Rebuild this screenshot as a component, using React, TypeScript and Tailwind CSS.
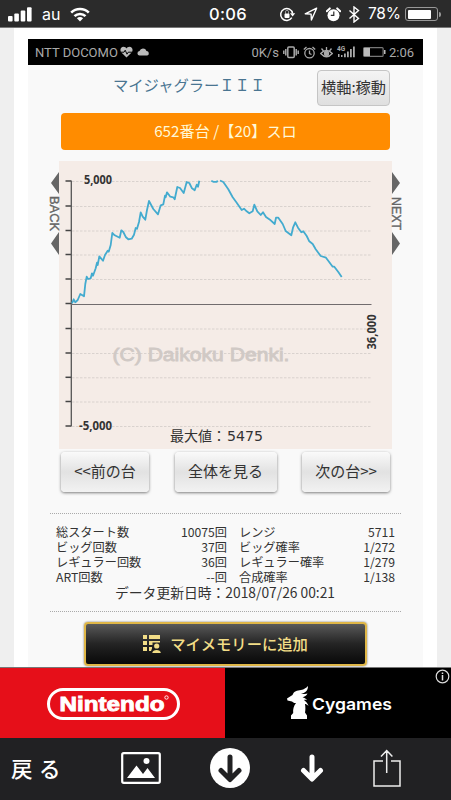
import type { ReactNode } from "react";
import { BsLockFill } from "react-icons/bs";

const JP = "font-['Noto_Sans_CJK_JP',sans-serif]";

interface Stat {
  label: string;
  value: string;
}

const leftStats: Stat[] = [
  { label: "総スタート数", value: "10075回" },
  { label: "ビッグ回数", value: "37回" },
  { label: "レギュラー回数", value: "36回" },
  { label: "ART回数", value: "--回" },
];

const rightStats: Stat[] = [
  { label: "レンジ", value: "5711" },
  { label: "ビッグ確率", value: "1/272" },
  { label: "レギュラー確率", value: "1/279" },
  { label: "合成確率", value: "1/138" },
];

const ticks = [181, 206, 230.5, 254.5, 279, 303.5, 328.5, 353, 377.3, 401.5, 426];

// the line leaves the plot above 5,000, so it comes in three pieces
const series = [
  "72,303.3 73.7,299.3 75.3,302.3 77.7,300 80.3,294 84,296.3 85.3,284 86.7,276.7 88,279 90.7,278.3 92,273.3 93,275.7 95.7,268.3 97,262.7 97.7,265 99.3,256.3 103,260.7 105,255 107.7,250.7 108.7,251.7 110.7,245 112.3,233 114.7,235.3 119.7,237.7 121.3,230.3 123.3,232 126,237.3 128.3,239.3 131.7,238.7 134,234.7 135.7,228 137,228.7 139,222 140.7,212.3 142.7,216.7 145.3,219.7 147,210 149,201 153.3,209 158,214.3 160.7,205.3 163.3,204.3 165,195.7 165.7,197.3 167,192.3 170.3,196.7 173.3,197.3 174.7,199.3 177.3,187 180,188 183.7,193 186.7,182 189.3,183 192,188.3 194.7,190.3 196.7,184.7 198,186.7 199.3,180.7",
  "211.3,180.7 213.3,181.8 216.7,181.8 217.7,180.7",
  "220,180.5 223.3,182 228.3,189.3 232.7,197.3 236.7,202.7 241.7,210 244,208.7 246.7,211.3 249.3,213.3 252.7,211.3 254.3,204.7 257.3,211.3 260.7,215 263,212.3 266,217 270.7,220.3 274.7,224 276,217.7 278.3,217.7 282.7,224 285.7,231 291.3,235.3 293,227.7 295.3,222.3 298,227.7 301.3,232.3 303.3,231.3 306.7,236 309.3,241.3 312.7,244 315.7,249.3 320.7,256 326,257.7 332.7,266.7 334.3,266.7 338.3,272 341.7,277",
];

function IosStatusBar() {
  return (
    <div className="flex h-[28px] shrink-0 items-center border-b border-[#777] bg-[#2b2b2b] pt-[1px] font-['Inter','Roboto',sans-serif] text-white">
      <svg className="ml-[8px] h-[15px] w-[24px]" viewBox="0 0 24 15" fill="currentColor">
        <rect x="0" y="9" width="4.6" height="5.5" rx="1" />
        <rect x="6.3" y="6.5" width="4.6" height="8" rx="1" />
        <rect x="12.7" y="3.5" width="4.6" height="11" rx="1" />
        <rect x="19" y="0.3" width="4.6" height="14.2" rx="1" />
      </svg>
      <span className="ml-[10px] w-[28px] text-[16px] leading-none">au</span>
      <svg className="h-[15px] w-[20px]" viewBox="0 0 20 15" fill="none" stroke="currentColor" strokeWidth="2.6">
        <path d="M1.200 5.600C6 .8 14 .8 18.800 5.600" />
        <path d="M4.500 9.200C7.500 6.200 12.500 6.200 15.500 9.200" />
        <path d="M10 14.500L6.900 11.300C8.700 9.700 11.300 9.700 13.100 11.300z" fill="currentColor" stroke="none" />
      </svg>
      <span className="ml-[119px] w-[70px] text-[16.5px] font-medium leading-none tracking-[0.3px]">0:06</span>
      <div className="flex items-center">
        <span className="relative h-[16px] w-[17px]">
          <svg className="size-full" viewBox="0 0 17 16" fill="none" stroke="currentColor" strokeWidth="1.5">
            <path d="M12.8 11.6A6 6 0 1 1 13.6 7.5" />
            <path d="M11 7.2h5.2l-2.6 3.2z" fill="currentColor" stroke="none" />
          </svg>
          <BsLockFill className="absolute top-[4px] left-[3.5px] size-[8px]" />
        </span>
        <svg className="ml-[8px] size-[14px]" viewBox="0 0 14 14" fill="none" stroke="currentColor" strokeWidth="1.4">
          <path d="M12.6 1.2L1.2 6.8l5.9.3.3 5.9z" strokeLinejoin="round" />
        </svg>
        <svg className="ml-[8px] size-[15px]" viewBox="0 0 15 15">
          <circle cx="7.5" cy="8.2" r="6" fill="white" />
          <path d="M.8 4.2L3.8 1.4M14.2 4.2l-3-2.8" stroke="white" strokeWidth="2" strokeLinecap="round" />
          <path d="M7.8 4.6v3.8H4.8" stroke="#2b2b2b" strokeWidth="1.2" fill="none" />
        </svg>
        <svg className="ml-[7px] h-[17px] w-[12px]" viewBox="0 0 12 17" fill="none" stroke="currentColor" strokeWidth="1.4">
          <path d="M1.500 4.500l9 8L6 16V1l4.500 3.500-9 8" />
        </svg>
        <span className="ml-[8px] w-[37px] text-[15.5px] leading-none tracking-[-0.2px]">78%</span>
        <div className="h-[14px] w-[33px] rounded-[3px] border border-[#999] p-[1.5px]">
          <div className="h-full w-[23px] rounded-[1px] bg-white" />
        </div>
        <div className="ml-[1px] h-[5px] w-[2px] rounded-r bg-[#999]" />
      </div>
    </div>
  );
}

function AndroidBar() {
  return (
    <div className="flex h-[26px] shrink-0 items-center justify-between bg-black pr-[9px] pl-[7px] font-['Roboto',sans-serif] text-[#a9a9a9]">
      <div className="flex items-center">
        <span className="text-[13px] leading-none">NTT DOCOMO</span>
        <svg className="ml-[2px] h-[12px] w-[13px]" viewBox="0 0 13 12">
          <path d="M6.5 11.6L1.4 6.6C-.6 4.2.7.8 3.5.8c1.400 0 2.500.8 3 1.800.5-1 1.600-1.800 3-1.800 2.800 0 4.100 3.400 2.100 5.800z" fill="#bbb" />
          <path d="M1 6.200h3l1.200-2 1.800 4 1.200-2H12" stroke="black" fill="none" strokeWidth="1" />
        </svg>
        <svg className="ml-[4px] h-[8px] w-[13px]" viewBox="0 0 13 8" fill="#bbb">
          <path d="M2.800 7.500a2.200 2.200 0 0 1-.3-4.400A3.700 3.700 0 0 1 9.500 3a2.300 2.300 0 0 1 .7 4.500z" />
        </svg>
      </div>
      <div className="flex items-center">
        <span className="text-[13px] leading-none">0K/s</span>
        <svg className="ml-[4px] h-[14px] w-[16px]" viewBox="0 0 16 14" fill="none" stroke="currentColor" strokeWidth="1.500">
          <rect x="4.800" y="2" width="6.400" height="10.500" rx="1" />
          <path d="M2.800 4v6.500M13.200 4v6.500M.8 5.500v3.500M15.200 5.500v3.500" />
        </svg>
        <svg className="ml-[4px] size-[13px]" viewBox="0 0 13 13" fill="none" stroke="currentColor" strokeWidth="1.300">
          <circle cx="6.500" cy="7.200" r="4.700" />
          <path d="M.8 3.500L3.500 1M12.200 3.500L9.500 1M6.500 4.500v3l2 1" />
        </svg>
        <svg className="ml-[4px] size-[13px]" viewBox="0 0 13 13" fill="none" stroke="currentColor" strokeWidth="1.300">
          <path d="M.7 7.500Q6.500 1.500 12.300 7.500Q6.500 14 .7 7.500z" />
          <circle cx="6.500" cy="7.500" r="2" fill="currentColor" />
          <path d="M6.500 1v3M1.500 2.500l2 2.500M11.500 2.500l-2 2.500" />
        </svg>
        <svg className="ml-[4px] h-[14px] w-[18px] overflow-visible" viewBox="0 0 18 14" fill="currentColor">
          <text x="0" y="5.500" fontSize="6.500" fontWeight="700">4G</text>
          <path d="M1 9h1.500v3H1zM4 10h1.500v2H4zM7 8.500h1.800v3.800H7zM10 6.500h1.800v5.800H10zM13 4h1.800v8.300H13zM16 1.500h1.800v10.800H16z" />
        </svg>
        <svg className="ml-[8px] h-[10px] w-[23px]" viewBox="0 0 23 10">
          <rect x=".6" y=".6" width="19.500" height="8.800" rx="1" fill="none" stroke="#777" strokeWidth="1.200" />
          <rect x="1" y="1" width="6" height="8" fill="#bbb" />
          <rect x="21" y="3" width="1.500" height="4" fill="#bbb" />
        </svg>
        <span className="ml-[3px] text-[13px] leading-none">2:06</span>
      </div>
    </div>
  );
}

function SlumpGraph() {
  return (
    <svg className="ml-[22px] h-[288px] w-[351px] shrink-0 overflow-visible" viewBox="50 161 351 288">
      <rect x="59" y="161" width="333" height="288" fill="#f5ece7" />
      <path d="M59 172v22l-8-11zM59 232v23l-8-11.500zM392 172v22l8-11zM392 232v23l8-11.500z" fill="#666" />
      <g className="font-['Liberation_Sans',sans-serif]" fontSize="13" fill="#666" stroke="#666" strokeWidth="0.4">
        <text transform="translate(50 196) rotate(90)" textLength="35" lengthAdjust="spacingAndGlyphs">BACK</text>
        <text transform="translate(392 197) rotate(90)" textLength="33" lengthAdjust="spacingAndGlyphs">NEXT</text>
      </g>
      {ticks.map((y) => (
        <g key={y}>
          <path d={`M65.500 ${y}H71`} stroke="#444" strokeWidth="1.500" />
          {y !== 303.5 && <path d={`M72 ${y + 0.5}H371`} stroke="#d9d2ce" strokeDasharray="2.500 1.500" />}
        </g>
      ))}
      <path d="M71.300 180.500V426.500" stroke="#555" strokeWidth="1.300" />
      <path d="M71 304.500H371.500" stroke="#716c6e" />
      <text x="112.500" y="361" fontSize="18.500" textLength="177" lengthAdjust="spacingAndGlyphs" fill="#d0c9c5" stroke="#d0c9c5" strokeWidth="0.8" className="font-['Liberation_Sans',sans-serif]">
        (C) Daikoku Denki.
      </text>
      {series.map((points) => (
        <polyline key={points} points={points} fill="none" stroke="#43abcf" strokeWidth="1.800" strokeLinejoin="round" />
      ))}
      <g className="font-['Open_Sans',sans-serif]" fontSize="12" fontWeight="700" fill="#333">
        <text x="84" y="184" textLength="28" lengthAdjust="spacingAndGlyphs">5,000</text>
        <text x="79" y="429.500" textLength="33" lengthAdjust="spacingAndGlyphs">-5,000</text>
        <text transform="translate(375.500 349.500) rotate(-90)" textLength="35" lengthAdjust="spacingAndGlyphs">36,000</text>
      </g>
      <text x="170" y="440.500" fontSize="14" fill="#333" className="font-['DejaVu_Sans','Noto_Sans_CJK_JP',sans-serif]">
        <tspan>最大値：</tspan>
        <tspan x="227" textLength="36" lengthAdjust="spacingAndGlyphs">5475</tspan>
      </text>
    </svg>
  );
}

function NavButton({ width, children }: { width: string; children: ReactNode }) {
  return (
    <button
      className={`${width} h-[40px] rounded-[4px] bg-linear-to-b from-[#fafafa] from-0% via-[#e2e2e2] via-50% to-[#f2f2f2] pb-[3px] text-[15px] leading-none whitespace-nowrap text-[#333] shadow-[0_1px_3px_rgba(0,0,0,0.5)]`}
    >
      {children}
    </button>
  );
}

function StatColumn({ stats, className }: { stats: Stat[]; className: string }) {
  return (
    <dl className={className}>
      {stats.map((s) => (
        <div key={s.label} className="flex h-[15.3px] items-center justify-between whitespace-nowrap">
          <dt>{s.label}</dt>
          <dd>{s.value}</dd>
        </div>
      ))}
    </dl>
  );
}

function AdBanner() {
  return (
    <div className="relative flex h-[71px] shrink-0 border-t border-[#777]">
      <div className="flex w-[225px] items-center bg-[#e60f19] pl-[47px]">
        <div className="mt-[1px] flex h-[32px] w-[133px] items-center justify-center rounded-full border-[3px] border-white">
          <svg className="h-[24px] w-[115px] overflow-visible" viewBox="0 0 115 24" fill="white">
            <text x="3.500" y="19" fontSize="20.500" fontWeight="700" textLength="105" lengthAdjust="spacingAndGlyphs" stroke="white" strokeWidth="0.900" className="font-['Liberation_Sans',sans-serif]">
              Nintendo
            </text>
            <circle cx="110.500" cy="5.500" r="1.700" fill="none" stroke="white" strokeWidth="0.900" />
          </svg>
        </div>
      </div>
      <div className="flex flex-1 items-center bg-black pl-[62px] text-white">
        <svg className="h-[34px] w-[22px]" viewBox="0 0 22 34" fill="currentColor">
          <path d="M21 0c0 5-3 7-7 8 3 0 5 0 6.500-.5-1 2-3 3.500-5 3.800 2 .7 4 1.500 4.500 3-1-.5-2-.6-3-.4 2 1.500 3.500 3 4.500 6.100-1.500-1.500-2.500-2-3.500-2 .5 3 .5 6 0 8.500l2 3V33H4v-3.500l2.200-2.500c-.4-4 .5-7 2.800-10-2 .2-3-.5-4-1.500l-4.500-1L0 12.500 5.500 9C7 5 10 4.500 14 4c3-.5 5-2 7-4z" />
        </svg>
        <svg className="ml-[3px] h-[26px] w-[82px] overflow-visible" viewBox="0 0 82 26" fill="currentColor">
          <text x="0" y="20" fontSize="16.500" fontWeight="600" textLength="80" lengthAdjust="spacingAndGlyphs" className="font-['Inter',sans-serif]">
            Cygames
          </text>
        </svg>
      </div>
      <svg className="absolute top-[1px] right-[1px] size-[15px]" viewBox="0 0 15 15" fill="none" stroke="#ddd" strokeWidth="1.200">
        <circle cx="7.500" cy="7.500" r="6.300" />
        <path d="M7.500 6v5.500M7.500 3.500v1.400" strokeWidth="1.500" />
      </svg>
    </div>
  );
}

function Toolbar() {
  return (
    <div className="flex h-[62px] shrink-0 items-center bg-[#212123] pb-[2px] text-white">
      <span className={`${JP} ml-[11px] w-[110px] text-[21.5px] leading-none font-medium tracking-[6.5px]`}>戻る</span>
      <svg className="h-[32px] w-[40px]" viewBox="0 0 40 32">
        <rect x="1.200" y="1.200" width="37.600" height="29.600" rx="1.500" fill="none" stroke="white" strokeWidth="2.200" />
        <path d="M6 26l9.500-12.500 6.500 8.500 4.500-6L34 26z" fill="white" />
        <circle cx="25.500" cy="9" r="3" fill="white" />
      </svg>
      <svg className="ml-[49px] size-[40px]" viewBox="0 0 40 40" fill="none">
        <circle cx="20" cy="20" r="20" fill="white" />
        <path d="M20 9v21M11 22.500l9 9 9-9" stroke="#212123" strokeWidth="5" strokeLinecap="round" strokeLinejoin="round" />
      </svg>
      <svg className="ml-[50px] h-[28px] w-[24px]" viewBox="0 0 24 28" fill="none" stroke="white" strokeWidth="5" strokeLinecap="round" strokeLinejoin="round">
        <path d="M12 3v21M3.500 16.500L12 25l8.500-8.500" />
      </svg>
      <svg className="ml-[48px] h-[38px] w-[29px]" viewBox="0 0 29 38" fill="none" stroke="#ededed" strokeWidth="1.500">
        <path d="M11 12H2v25h26V12h-9M14.700 24V1.500M9 7.500l5.700-6 5.700 6" />
      </svg>
    </div>
  );
}

export default function App() {
  return (
    <div className="flex h-[800px] w-[451px] flex-col overflow-hidden bg-white">
      <IosStatusBar />
      <div className="flex h-[639px] shrink-0 justify-center overflow-hidden border-x-[14px] border-[#efefef] bg-white">
        <div className={`${JP} flex w-[395px] flex-col pt-[11px] text-[#333]`}>
          <AndroidBar />
          <div className="flex flex-1 flex-col bg-[#f9f9f9]">
            <div className="flex h-[48px] shrink-0 items-start pt-[5px]">
              <h1 className="mt-[5px] ml-[85px] w-[204px] text-[15.3px] leading-[18px] whitespace-nowrap text-[#4a7591]">マイジャグラーＩＩＩ</h1>
              <button className="h-[36px] w-[73px] rounded-[4px] border border-[#c5c5c5] bg-linear-to-b from-[#f4f4f4] to-[#dfdfdf] pb-[2px] text-[15.2px] leading-none whitespace-nowrap">
                横軸:稼動
              </button>
            </div>
            <div className="ml-[33px] flex h-[37px] w-[329px] shrink-0 items-center justify-center rounded-[4px] bg-[#ff8c00] pb-[2px] text-[15.2px] leading-none whitespace-pre text-[#fff8d8]">
              652番台 /【20】スロ
            </div>
            <div className="h-[11px] shrink-0" />
            <SlumpGraph />
            <div className="mt-[3px] ml-[33px] flex w-[329px] shrink-0 justify-between">
              <NavButton width="w-[88px]">&lt;&lt;前の台</NavButton>
              <NavButton width="w-[102px]">全体を見る</NavButton>
              <NavButton width="w-[88px]">次の台&gt;&gt;</NavButton>
            </div>
            <div className="mt-[21px] ml-[22px] h-[99px] w-[351px] shrink-0 border-y border-dotted border-[#aaa] pt-[10px]">
              <div className="flex pl-[6px] text-[12.2px] leading-none">
                <StatColumn stats={leftStats} className="w-[171px]" />
                <StatColumn stats={rightStats} className="ml-[12px] w-[156px]" />
              </div>
              <p className="pl-[65px] text-[13.8px] leading-[14px] whitespace-nowrap">データ更新日時：2018/07/26 00:21</p>
            </div>
            <button className="mt-[10px] ml-[56px] flex h-[44px] w-[283px] shrink-0 items-center justify-center gap-[9px] rounded-[4px] border-2 border-[#dfb647] bg-linear-to-b from-[#5a5a5a] from-0% via-[#242424] via-50% to-[#090909] pb-[1px] text-[15.3px] leading-none font-medium whitespace-nowrap text-[#f2dd87] shadow-[0_0_2px_rgba(0,0,0,0.6)]">
              <svg className="h-[18px] w-[18px]" viewBox="0 0 18 18" fill="currentColor">
                <path d="M0 0h4v4H0zM6 0h11v4H6zM0 6h4v4H0zM6 6h11v1.500H9.500V10H6zM0 12h4v4H0zM6 12h3v1.500l-1 2.500H6z" />
                <circle cx="13.700" cy="11" r="2.600" />
                <path d="M9.300 18c0-4 8.500-4 8.500 0z" />
              </svg>
              マイメモリーに追加
            </button>
          </div>
        </div>
      </div>
      <AdBanner />
      <Toolbar />
    </div>
  );
}
